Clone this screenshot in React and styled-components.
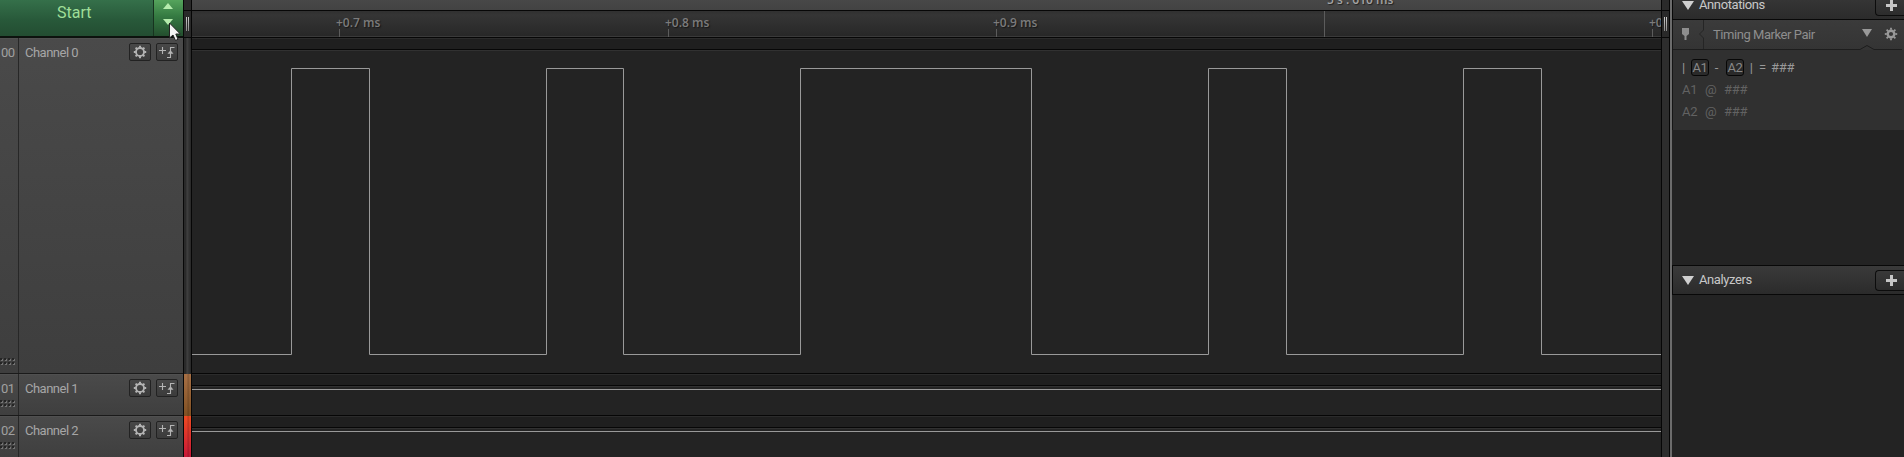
import React from "react";
import styled, { createGlobalStyle, css } from "styled-components";

const Global = createGlobalStyle`
  * { box-sizing: border-box; }
  html, body { margin: 0; height: 100%; overflow: hidden; background: #232323; }
  body { font-family: Roboto, "Liberation Sans", sans-serif; }
  svg { display: block; flex: none; }
`;

const Window = styled.div`
  position: relative;
  display: flex;
  width: 1904px;
  height: 457px;
  overflow: hidden;
`;

/* left column */
const Sidebar = styled.aside`
  width: 184px;
  flex: none;
  display: flex;
  flex-direction: column;
  border-right: 1px solid #080808;
  background: #454545;
`;
const StartBar = styled.div`
  display: flex;
  height: 38px;
  flex: none;
  border-bottom: 2px solid #0d120e;
`;
const StartButton = styled.div`
  width: 153px;
  padding: 2px 0 0 57px;
  font-size: 16px;
  line-height: 21px;
  color: #9fdf98;
  background: linear-gradient(#35704a, #28593a 55%, #234d32);
`;
const Spinner = styled.div`
  flex: 1;
  display: flex;
  flex-direction: column;
  align-items: center;
  gap: 10px;
  padding: 3px 2px 0 0;
  border-left: 1px solid #17331f;
  background: linear-gradient(#55a45c, #357a42 45%, #234e2e);
`;
const Channel = styled.div`
  display: flex;
  flex: none;
  height: ${(p) => p.$h}px;
  border-bottom: 1px solid #1a1a1a;
  background: linear-gradient(#4a4a4a, ${(p) => (p.$tall ? "#484848 15%, #3e3e3e" : "#3f3f3f")});
  box-shadow: inset 0 1px #505050;
`;
const ChannelIndex = styled.div`
  width: 19px;
  border-right: 1px solid #272727;
  display: flex;
  flex-direction: column;
  justify-content: space-between;
  padding: 6px 0 8px 0;
  font-size: 13px;
  line-height: 18px;
  letter-spacing: -0.5px;
  color: #a0a0a0;
`;
const IndexText = styled.span`
  padding-left: 1px;
`;
const ChannelBody = styled.div`
  flex: 1;
  display: flex;
  align-items: flex-start;
  padding: 5px 5px 0 6px;
`;
const ChannelName = styled.div`
  flex: 1;
  font-size: 13px;
  line-height: 20px;
  letter-spacing: -0.5px;
  color: #a6a6a6;
  white-space: nowrap;
`;
const IconButton = styled.div`
  width: 22px;
  height: 18px;
  margin-left: 5px;
  display: flex;
  align-items: center;
  justify-content: center;
  border: 1px solid #222;
  border-radius: 2px;
  background: linear-gradient(#484848, #3b3b3b);
`;

/* vertical gutters */
const Gutter = styled.div`
  width: 8px;
  flex: none;
  display: flex;
  flex-direction: column;
  border-right: 1px solid #060606;
  background: #2a2a2a;
`;
const RightGutter = styled(Gutter)`
  width: 9px;
  border-left: 1px solid #060606;
`;
const GutterCap = styled.div`
  height: 11px;
  border-bottom: 1px solid #080808;
`;
const GutterGrip = styled.div`
  height: 27px;
  border-bottom: 1px solid #080808;
  display: flex;
  justify-content: center;
  align-items: center;
  gap: 1px;
  background: #292929;
`;
const GripLine = styled.i`
  width: 1px;
  height: 14px;
  background: linear-gradient(#ccc, #888);
`;
const GutterTrack = styled.div`
  height: ${(p) => p.$h}px;
  ${(p) =>
    p.$tone
      ? css`background: ${p.$tone};`
      : css`background: linear-gradient(90deg, #2a2a2a 2px, #424242 3px, #323232 5px, #292929);`}
`;

/* plot */
const Plot = styled.main`
  width: 1469px;
  flex: none;
  display: flex;
  flex-direction: column;
  overflow: hidden;
`;
const MajorRuler = styled.div`
  height: 11px;
  flex: none;
  padding-left: 1135px;
  overflow: hidden;
  border-bottom: 1px solid #070707;
  background: linear-gradient(#484848, #434343);
  color: #a4a4a4;
  font: 600 12px/16px "Open Sans", sans-serif;
  text-shadow: 1px 1px 1px #222;
`;
const MajorText = styled.span`
  display: block;
  margin-top: -8px;
  white-space: pre;
`;
const Ruler = styled.div`
  display: flex;
  height: 27px;
  flex: none;
  padding-left: 144px;
  border-bottom: 1px solid #070707;
  background: linear-gradient(#303030, #353535 15%, #282828 95%, #3a3a3a 97%);
`;
const Tick = styled.div`
  flex: none;
  width: ${(p) => p.$w}px;
  display: flex;
  flex-direction: column;
  justify-content: flex-end;
  color: #7c7c7c;
  font: 600 12px/12px "Open Sans", sans-serif;
  text-shadow: 1px 1px 1px #181818;
  white-space: nowrap;
  &::after {
    content: "";
    flex: none;
    width: 1px;
    height: ${(p) => (p.$major ? 26 : 8)}px;
    margin-left: ${(p) => (p.$major ? 2 : 3)}px;
    background: #5c5c5c;
  }
`;
const Lane = styled.section`
  height: ${(p) => p.$h}px;
  flex: none;
  border-bottom: 1px solid #060606;
  background: #232323;
`;
const LaneHeader = styled.div`
  height: 12px;
  border-top: 1px solid #2b2b2b;
  border-bottom: 1px solid #070707;
  background: #1f1f1f;
`;
const LaneBody = styled.div`
  border-top: 1px solid #313131;
`;
const Flat = styled.div`
  height: 1px;
  margin-top: 2px;
  background: #999;
`;

/* right column */
const Panel = styled.aside`
  flex: 1;
  display: flex;
  flex-direction: column;
  border-left: 2px solid #6c6c6c;
  background: #232323;
`;
const PanelHeader = styled.div`
  display: flex;
  align-items: center;
  flex: none;
  height: 30px;
  margin-top: ${(p) => p.$top}px;
  padding-left: 9px;
  border: solid #080808;
  border-width: 1px 0 1px 1px;
  background: linear-gradient(#3a3a3a, #2b2b2b);
  color: #c8c8c8;
  font-size: 13px;
  letter-spacing: -0.4px;
`;
const PanelTitle = styled.div`
  flex: 1;
  margin-left: 5px;
  line-height: 18px;
`;
const AddButton = styled.div`
  width: 29px;
  height: 21px;
  flex: none;
  display: flex;
  align-items: center;
  padding-left: 10px;
  border: 1px solid #0c0c0c;
  border-right: 0;
  border-radius: 4px 0 0 4px;
  background: linear-gradient(#393939, #2c2c2c);
`;
const Annotation = styled.div`
  height: 110px;
  flex: none;
  background: #303030;
  border-left: 1px solid #161616;
`;
const AnnotationHead = styled.div`
  display: flex;
  height: 30px;
  background: linear-gradient(#3b3b3b, #343434);
`;
const AnnotationTitle = styled.div`
  width: 148px;
  padding: 5px 0 0 9px;
  font-size: 13px;
  line-height: 20px;
  letter-spacing: -0.45px;
  color: #8e8e8e;
  border-bottom: 1px solid #1d1d1d;
`;
const Formulas = styled.div`
  padding-top: 6px;
`;
const Formula = styled.div`
  display: flex;
  align-items: center;
  height: 22px;
  padding-left: 9px;
  color: ${(p) => (p.$dim ? "#626262" : "#999")};
  font-size: 13px;
  letter-spacing: -0.3px;
  white-space: pre;
`;
const Cell = styled.span`
  width: ${(p) => p.$w}px;
`;
const Marker = styled.span`
  width: 18px;
  height: 17px;
  border: 1px solid #070707;
  border-radius: 3px;
  line-height: 15px;
  text-align: center;
  letter-spacing: -0.5px;
  color: #888;
  background: #2a2a2a;
`;
const Cursor = styled.svg`
  position: absolute;
  left: 168px;
  top: 22px;
`;

const Triangle = ({ w, h, up, color }) => (
  <svg width={w} height={h} viewBox={`0 0 ${w} ${h}`}>
    <path fill={color} d={up ? `M0 ${h}H${w}L${w / 2} 0Z` : `M0 0H${w}L${w / 2} ${h}Z`} />
  </svg>
);

const GearShape = ({ color, radius, ring, tooth }) => (
  <g stroke={color} fill="none">
    <circle r={radius} strokeWidth={ring} />
    {Array.from({ length: 8 }, (_, i) => (
      <path key={i} d="M0 -4.2V-6.2" strokeWidth={tooth} transform={`rotate(${i * 45})`} />
    ))}
  </g>
);

const TriggerIcon = () => (
  <svg width="16" height="14" viewBox="0 0 16 14" fill="none" stroke="#b4b4b4">
    <path d="M0 5.5H7M3.5 2V9M15.5 2.5H11.5V12.5H8" strokeWidth="1.1" />
    <path d="M8.5 8.7L11.5 5.3L14.5 8.7Z" fill="#b4b4b4" stroke="none" />
  </svg>
);

const Plus = () => (
  <svg width="11" height="11" viewBox="0 0 11 11">
    <path d="M5.5 0V11M0 5.5H11" stroke="#c6c6c6" strokeWidth="3" />
  </svg>
);

const Grip = () => (
  <svg width="15" height="7" viewBox="0 0 15 7">
    {[0, 4, 8, 12].map((x) =>
      [0, 4].map((y) => (
        <g key={`${x}-${y}`}>
          <rect x={x + 1} y={y + 1} width="2" height="2" fill="#747474" />
          <rect x={x} y={y} width="2" height="2" fill="#252525" />
        </g>
      ))
    )}
  </svg>
);

const channels = [
  { id: "00", name: "Channel 0", h: 336, tall: true },
  { id: "01", name: "Channel 1", h: 42 },
  { id: "02", name: "Channel 2", h: 42 },
];

const edges = [99, 177, 354, 431, 608, 839, 1016, 1094, 1271, 1349];
const HIGH = 17.5;
const LOW = 303.5;
const wave =
  `M0 ${LOW}` +
  edges.map((x, i) => `H${x + 0.5}V${i % 2 ? LOW : HIGH}`).join("") +
  "H1469";

export default function App() {
  return (
    <Window>
      <Global />
      <Sidebar>
        <StartBar>
          <StartButton>Start</StartButton>
          <Spinner>
            <Triangle w={10} h={6} up color="#b5ecac" />
            <Triangle w={10} h={6} color="#b5ecac" />
          </Spinner>
        </StartBar>
        {channels.map((c) => (
          <Channel key={c.id} $h={c.h} $tall={c.tall}>
            <ChannelIndex>
              <IndexText>{c.id}</IndexText>
              <Grip />
            </ChannelIndex>
            <ChannelBody>
              <ChannelName>{c.name}</ChannelName>
              <IconButton>
                <svg width="14" height="14" viewBox="-7 -7 14 14">
                  <GearShape color="#b4b4b4" radius={4} ring={1.8} tooth={2} />
                </svg>
              </IconButton>
              <IconButton><TriggerIcon /></IconButton>
            </ChannelBody>
          </Channel>
        ))}
      </Sidebar>
      <Gutter>
        <GutterCap />
        <GutterGrip><GripLine /><GripLine /></GutterGrip>
        <GutterTrack $h={336} />
        <GutterTrack $h={42} $tone="linear-gradient(90deg, #0000 3px, #0003 4px, #0000 6px), linear-gradient(#a87045, #805022)" />
        <GutterTrack $h={41} $tone="linear-gradient(90deg, #0000 3px, #0003 4px, #0000 6px), linear-gradient(#f04a22, #c81838)" />
      </Gutter>
      <Plot>
        <MajorRuler><MajorText>5 s : 610 ms</MajorText></MajorRuler>
        <Ruler>
          <Tick $w={329}>+0.7 ms</Tick>
          <Tick $w={328}>+0.8 ms</Tick>
          <Tick $w={329}>+0.9 ms</Tick>
          <Tick $w={327} $major />
          <Tick $w={12}>+0.1 ms</Tick>
        </Ruler>
        <Lane $h={336}>
          <LaneHeader />
          <LaneBody>
            <svg width="1469" height="310" viewBox="0 0 1469 310">
              <path d={wave} fill="none" stroke="#999" />
            </svg>
          </LaneBody>
        </Lane>
        <Lane $h={42}>
          <LaneHeader />
          <LaneBody><Flat /></LaneBody>
        </Lane>
        <Lane $h={42}>
          <LaneHeader />
          <LaneBody><Flat /></LaneBody>
        </Lane>
      </Plot>
      <RightGutter>
        <GutterCap />
        <GutterGrip><GripLine /><GripLine /></GutterGrip>
        <GutterTrack $h={419} $tone="#2d2d2d" />
      </RightGutter>
      <Panel>
        <PanelHeader $top={-10}>
          <Triangle w={12} h={9} color="#d0d0d0" />
          <PanelTitle>Annotations</PanelTitle>
          <AddButton><Plus /></AddButton>
        </PanelHeader>
        <Annotation>
          <AnnotationHead>
            <svg width="31" height="30" viewBox="0 0 31 30" fill="none">
              <path d="M9 8h7v6l-2.5 2v4h-2v-4L9 14z" fill="#8e8e8e" />
              <path d="M30.5 0V10L26.5 14L30.5 18V29" stroke="#252525" />
              <path d="M0 29.5H31" stroke="#1d1d1d" />
            </svg>
            <AnnotationTitle>Timing Marker Pair</AnnotationTitle>
            <svg width="50" height="30" viewBox="0 0 50 30" fill="none">
              <path d="M0 29.5H8L15 25.5L22 29.5H50" stroke="#1d1d1d" />
              <path d="M10 9H20L15 17Z" fill="#999" />
              <g transform="translate(39 14)">
                <GearShape color="#999" radius={3.3} ring={2.4} tooth={1.8} />
              </g>
            </svg>
          </AnnotationHead>
          <Formulas>
            <Formula>
              <Cell $w={9}>|</Cell>
              <Marker>A1</Marker>
              <Cell $w={17}>{"  -"}</Cell>
              <Marker>A2</Marker>
              <Cell $w={15}>{"  |"}</Cell>
              <Cell $w={12}>=</Cell>
              <Cell>###</Cell>
            </Formula>
            <Formula $dim><Cell $w={23}>A1</Cell><Cell $w={19}>@</Cell><Cell>###</Cell></Formula>
            <Formula $dim><Cell $w={23}>A2</Cell><Cell $w={19}>@</Cell><Cell>###</Cell></Formula>
          </Formulas>
        </Annotation>
        <PanelHeader $top={135}>
          <Triangle w={12} h={9} color="#d0d0d0" />
          <PanelTitle>Analyzers</PanelTitle>
          <AddButton><Plus /></AddButton>
        </PanelHeader>
      </Panel>
      <Cursor width="14" height="22" viewBox="0 0 14 22">
        <path
          d="M1.5 1V16L5 13L7.5 18.5L10 17.3L7.8 12H12.3Z"
          fill="#f4f4f4" stroke="#222" strokeWidth="1"
        />
      </Cursor>
    </Window>
  );
}
